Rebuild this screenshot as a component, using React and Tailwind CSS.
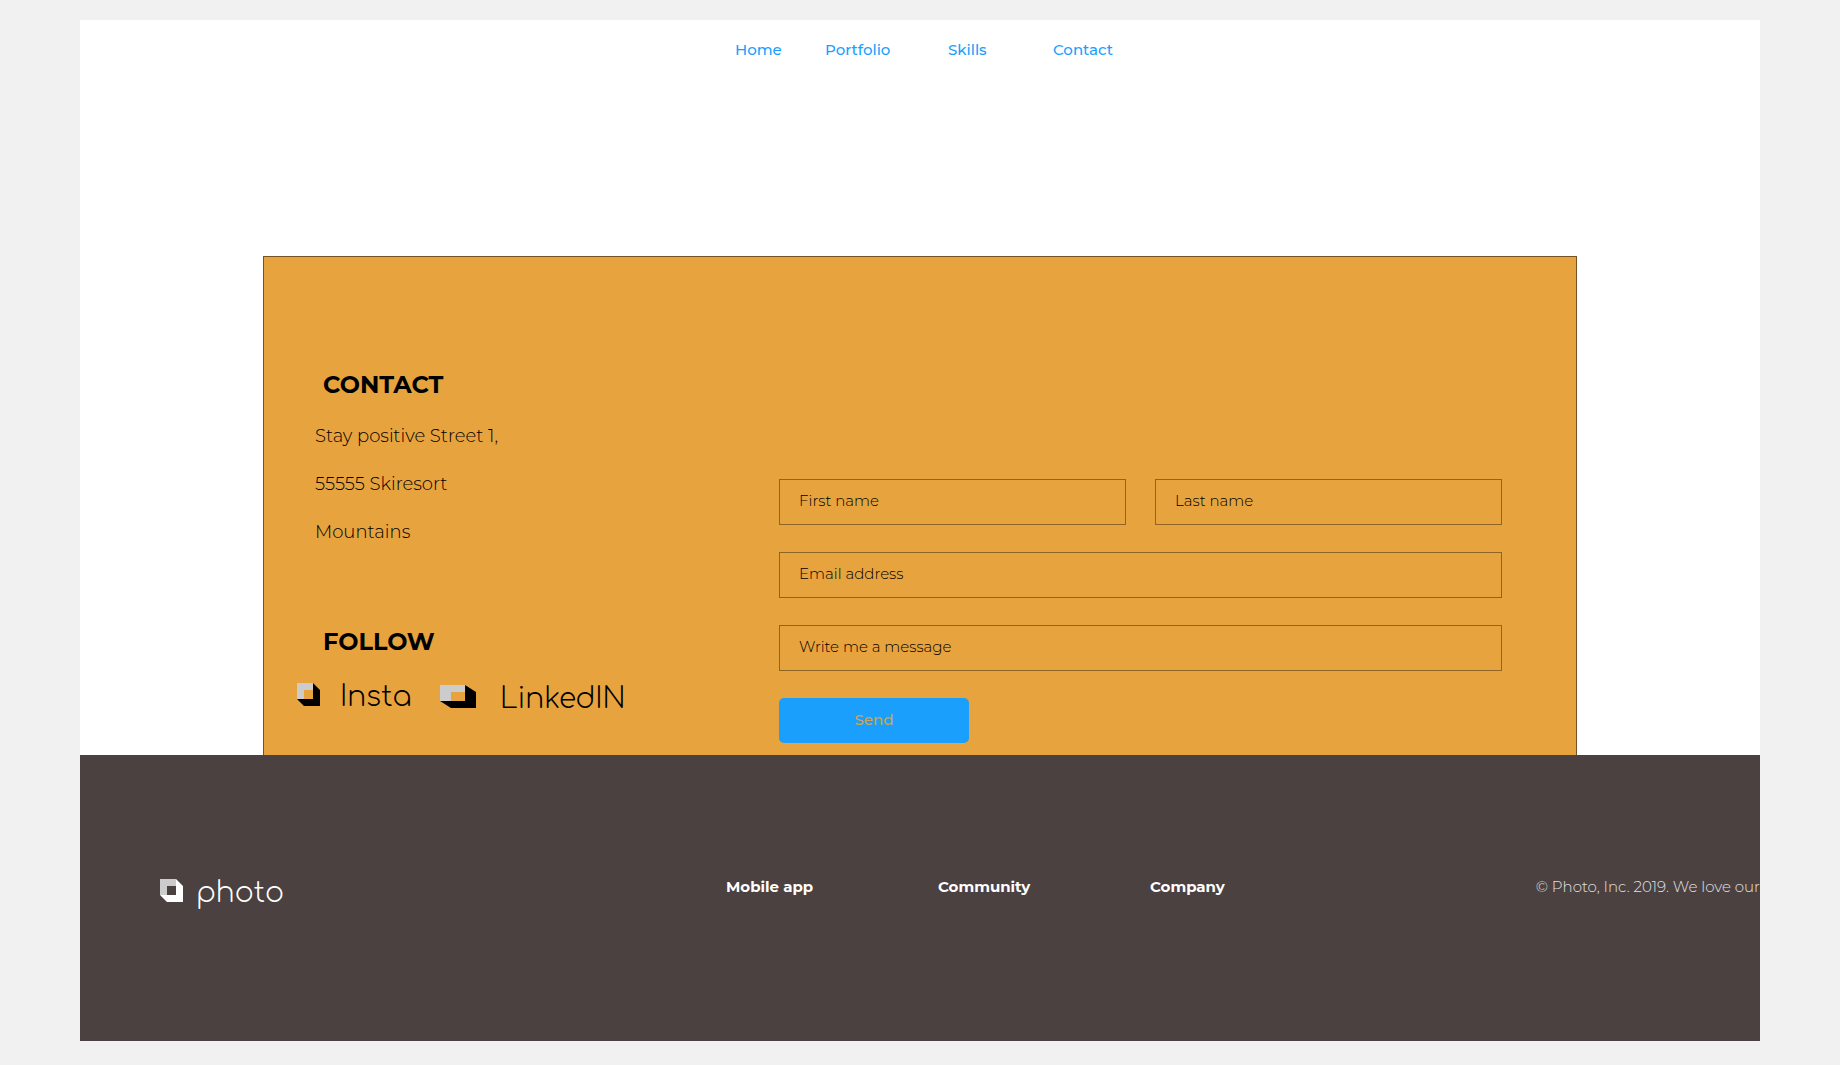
import React from "react";

const navLinks = [
  { label: "Home", width: "w-[90px]" },
  { label: "Portfolio", width: "w-[123px]" },
  { label: "Skills", width: "w-[105px]" },
  { label: "Contact", width: "w-[58px]" },
];

const footerLinks = ["Mobile app", "Community", "Company"];

function CubeMark({ className }) {
  return (
    <svg viewBox="0 0 23 23" preserveAspectRatio="none" className={className} aria-hidden="true">
      <path d="M16 0L23 7V23H7L0 16H16Z" fill="currentColor" />
      <path d="M0 0H16V7H7V16H0Z" fill="#cccccc" />
    </svg>
  );
}

function Field({ id, label, type = "text", className = "" }) {
  return (
    <div className={className}>
      <input
        id={id}
        type={type}
        aria-label={label}
        placeholder={label}
        className="block h-[46px] w-full border border-[#8f6526] bg-transparent px-[19px] pb-1 text-[15px] font-light text-black outline-none placeholder:text-black placeholder:opacity-100"
      />
    </div>
  );
}

export default function App() {
  return (
    <div className="min-h-screen bg-[#f1f1f1] px-20 pt-5 pb-6 font-['Montserrat','Inter',sans-serif]">
      <div className="overflow-hidden bg-white">
        <header className="h-[236px] pt-[18px]">
          <nav className="flex justify-center pl-1.5 text-[15px] leading-6 font-medium text-[#1a9ffc]">
            {navLinks.map((l) => (
              <div key={l.label} className={l.width}>
                <a href="#">{l.label}</a>
              </div>
            ))}
          </nav>
        </header>

        <main className="mx-[183px] flex h-[499px] border border-b-0 border-[#755224] bg-[#e7a33e]">
          <section className="w-[515px] shrink-0 pt-28">
            <h2 className="pl-[59px] text-2xl leading-8 font-bold text-black">CONTACT</h2>
            <address className="mt-[11px] pl-[51px] text-[18px] leading-[48px] font-light text-black not-italic">
              Stay positive Street 1,
              <br />
              55555 Skiresort
              <br />
              Mountains
            </address>
            <h2 className="mt-[70px] pl-[59px] text-2xl leading-8 font-bold text-black">FOLLOW</h2>
            <div className="mt-[13px] flex items-start pl-[33px] font-['Comfortaa','Montserrat',sans-serif] text-[28px] leading-10 font-light text-black">
              <a href="#" className="flex w-[143px] items-center gap-5">
                <CubeMark className="h-[23px] w-[23px]" />
                <span className="pt-1.5">Insta</span>
              </a>
              <a href="#" className="mt-0.5 flex items-center gap-6">
                <CubeMark className="h-[23px] w-9" />
                <span className="pt-1.5">LinkedIN</span>
              </a>
            </div>
          </section>

          <form className="mr-[74px] grid flex-1 grid-cols-2 content-start gap-x-[29px] gap-y-[27px] pt-[222px]">
            <Field id="first" label="First name" />
            <Field id="last" label="Last name" />
            <Field id="email" type="email" label="Email address" className="col-span-2" />
            <Field id="message" label="Write me a message" className="col-span-2" />
            <button
              type="button"
              className="h-[45px] w-[190px] rounded-[5px] bg-[#1a9ffc] text-[15px] font-medium text-[#cda35d]"
            >
              Send
            </button>
          </form>
        </main>

        <footer className="flex h-[286px] bg-[#4b4140] pl-20 text-[15px] leading-6 text-white">
          <a
            href="#"
            className="mt-[115px] flex h-10 flex-1 items-center gap-[13px] font-['Comfortaa','Montserrat',sans-serif] text-[28px] leading-10 font-light"
          >
            <CubeMark className="h-[23px] w-[23px]" />
            <span className="pt-1.5">photo</span>
          </a>
          <nav className="mt-[120px] flex font-bold">
            {footerLinks.map((l) => (
              <div key={l} className="w-[212px]">
                <a href="#">{l}</a>
              </div>
            ))}
          </nav>
          <p className="mt-[120px] w-[398px] text-right font-light whitespace-nowrap text-[#e4e2e2]">
            © Photo, Inc. 2019. We love our
          </p>
        </footer>
      </div>
    </div>
  );
}
